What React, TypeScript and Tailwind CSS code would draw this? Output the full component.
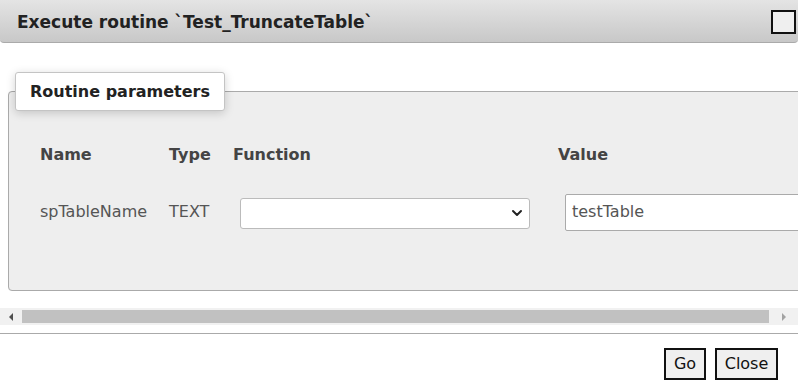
import React from 'react';
import { ChevronDown } from 'lucide-react';

const App: React.FC = () => {
  return (
    <div className="w-[798px] h-[383px] bg-white overflow-hidden font-['DejaVu_Sans',sans-serif] text-[#333]">
      {/* Title bar */}
      <div className="h-[43px] flex items-center justify-between bg-gradient-to-b from-[#e4e4e4] to-[#c8c8c8] border-b border-[#aaa] rounded-b-[4px]">
        <span className="pl-[17px] pt-[3px] text-[17px] font-bold text-[#222]">Execute routine `Test_TruncateTable`</span>
        <button className="w-[25px] h-[24px] mr-[2px] mt-[2px] border-2 border-[#111] bg-[#efefef]" />
      </div>

      {/* Scrollable content */}
      <div className="h-[265px] overflow-hidden">
        <div className="w-[820px] pt-[29px] pl-[8px]">
          <fieldset className="w-[771px] border border-[#aaa] rounded-[4px] bg-[#eee] px-[6px] pb-[59px]">
            <legend className="h-[39px] leading-[37px] px-[14px] bg-white border border-[#c4c4c4] rounded-[3px] shadow-[0_2px_10px_rgba(0,0,0,0.18)] text-[16px] font-bold text-[#222]">
              Routine parameters
            </legend>
            <div className="pl-[25px] pt-[24px]">
              <div className="flex h-[40px] items-center text-[16px] font-bold text-[#444]">
                <div className="w-[129px]">Name</div>
                <div className="w-[64px]">Type</div>
                <div className="w-[325px]">Function</div>
                <div>Value</div>
              </div>
              <div className="flex items-center h-[38px] mt-[18px] text-[16px] text-[#555]">
                <div className="w-[129px]">spTableName</div>
                <div className="w-[64px]">TEXT</div>
                <div className="w-[325px] pl-[7px]">
                  <div className="w-[290px] h-[31px] mt-[2px] bg-white border border-[#bbb] rounded-[3px] flex items-center justify-end pr-[4px]">
                    <ChevronDown className="w-[16px] h-[16px] text-[#222]" strokeWidth={3} />
                  </div>
                </div>
                <div className="pl-[7px]">
                  <div className="w-[250px] h-[37px] bg-white border border-[#aaa] rounded-[2px] flex items-center pl-[6px] text-[#555]">
                    testTable
                  </div>
                </div>
              </div>
            </div>
          </fieldset>
        </div>
      </div>

      {/* Horizontal scrollbar */}
      <div className="h-[17px] bg-[#f1f1f1] flex items-center">
        <div className="w-[22px] flex justify-center">
          <div className="w-0 h-0 border-y-[4px] border-y-transparent border-r-[4px] border-r-[#505050]" />
        </div>
        <div className="w-[747px] h-[13px] bg-[#c1c1c1]" />
        <div className="flex-1 flex justify-center">
          <div className="w-0 h-0 border-y-[4px] border-y-transparent border-l-[4px] border-l-[#a3a3a3]" />
        </div>
      </div>

      <div className="h-[8px]" />
      <div className="border-t border-[#aaa]" />

      {/* Footer */}
      <div className="flex justify-end gap-[9px] pr-[20px] pt-[14px]">
        <button className="w-[42px] h-[32px] border-2 border-[#111] bg-[#efefef] text-[16px] text-[#111]">Go</button>
        <button className="w-[63px] h-[32px] border-2 border-[#111] bg-[#efefef] text-[16px] text-[#111]">Close</button>
      </div>
    </div>
  );
};

export default App;
